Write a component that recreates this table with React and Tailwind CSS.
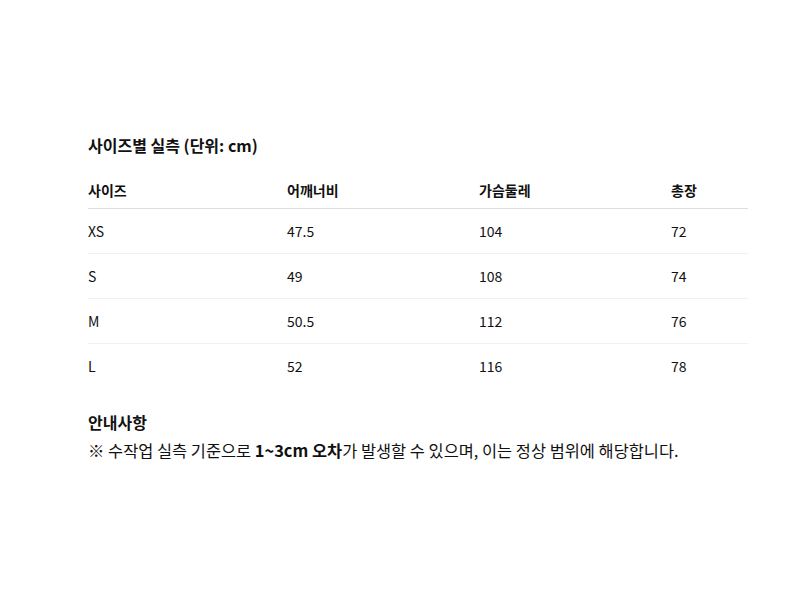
const rows = [
  { size: 'XS', shoulder: '47.5', chest: '104', length: '72' },
  { size: 'S', shoulder: '49', chest: '108', length: '74' },
  { size: 'M', shoulder: '50.5', chest: '112', length: '76' },
  { size: 'L', shoulder: '52', chest: '116', length: '78' },
];

export default function App() {
  return (
    <div className="w-[800px] h-[600px] overflow-hidden bg-white text-[#111] font-['Noto_Sans_CJK_KR',sans-serif]">
      <div className="pt-[133px] px-[88px]">
        <h2 className="text-[16px] leading-6 font-bold">사이즈별 실측 (단위: cm)</h2>

        <table className="mt-[15px] w-[660px] text-[14px] border-collapse">
          <thead>
            <tr className="border-b border-[#dddddd]">
              <th className="w-[199px] text-left font-bold pt-2 pb-2 leading-5">사이즈</th>
              <th className="w-[192px] text-left font-bold pt-2 pb-2 leading-5">어깨너비</th>
              <th className="w-[192px] text-left font-bold pt-2 pb-2 leading-5">가슴둘레</th>
              <th className="text-left font-bold pt-2 pb-2 leading-5">총장</th>
            </tr>
          </thead>
          <tbody>
            {rows.map((r, i) => (
              <tr key={r.size} className={i < rows.length - 1 ? 'border-b border-[#f0f0f0]' : ''}>
                <td className="py-3 leading-5">{r.size}</td>
                <td className="py-3 leading-5">{r.shoulder}</td>
                <td className="py-3 leading-5">{r.chest}</td>
                <td className="py-3 leading-5">{r.length}</td>
              </tr>
            ))}
          </tbody>
        </table>

        <h3 className="mt-[22px] text-[16px] leading-6 font-bold">안내사항</h3>
        <p className="mt-1 text-[16.4px] leading-6">
          ※ 수작업 실측 기준으로 <strong className="font-bold">1~3cm 오차</strong>가 발생할 수 있으며, 이는 정상 범위에 해당합니다.
        </p>
      </div>
    </div>
  );
}
